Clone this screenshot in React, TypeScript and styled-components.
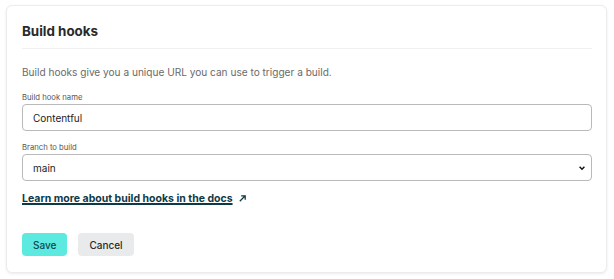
import styled, { createGlobalStyle } from 'styled-components'

const Global = createGlobalStyle`
  body {
    margin: 0;
    background: #ffffff;
    font-family: Inter, 'Liberation Sans', sans-serif;
  }
`

export default function App () {
  return (
    <>
      <Global />
      <Page>
        <Card>
          <Title>Build hooks</Title>
          <Body>
            <Intro>Build hooks give you a unique URL you can use to trigger a build.</Intro>
            <Field $gap={15}>
              <Label>Build hook name</Label>
              <Input defaultValue="Contentful" />
            </Field>
            <Field $gap={12}>
              <Label>Branch to build</Label>
              <SelectWrap>
                <Select defaultValue="main">
                  <option value="main">main</option>
                </Select>
                <Chevron viewBox="0 0 10 10">
                  <path d="M2 3.5 L5 6.5 L8 3.5" fill="none" stroke="#111" strokeWidth="1.8" />
                </Chevron>
              </SelectWrap>
            </Field>
            <DocsLink href="#">
              <span>Learn more about build hooks in the docs</span>
              <svg width="9" height="9" viewBox="0 0 10 10">
                <path d="M2 8 L8 2 M3.5 2 H8 V6.5" fill="none" stroke="#0e3a47" strokeWidth="1.4" />
              </svg>
            </DocsLink>
            <Actions>
              <Button $primary>Save</Button>
              <Button>Cancel</Button>
            </Actions>
          </Body>
        </Card>
      </Page>
    </>
  )
}

const Page = styled.div`
  padding: 5px 7px 6px 6px;
`

const Card = styled.section`
  background: #fff;
  border: 1px solid #ececec;
  border-radius: 6px;
  box-shadow: 0 1px 3px rgba(0,0,0,0.08);
  padding: 0 14px 16px 15px;
  height: 268px;
  box-sizing: border-box;
`

const Title = styled.h2`
  margin: 0;
  padding: 17px 0 9px 0;
  font-size: 13.4px;
  font-weight: 700;
  color: #2a2a2a;
  border-bottom: 1px solid #f0f0f0;
`

const Body = styled.div`
  display: flex;
  flex-direction: column;
`

const Intro = styled.p`
  margin: 17px 0 0 0;
  font-size: 10.1px;
  color: #6a6a6a;
`

const Field = styled.div<{ $gap: number }>`
  display: flex;
  flex-direction: column;
  margin-top: ${p => p.$gap}px;
`

const Label = styled.label`
  font-size: 7.7px;
  color: #555;
  margin-bottom: 2px;
`

const Input = styled.input`
  box-sizing: border-box;
  height: 27px;
  border: 1px solid #b9b9b9;
  border-radius: 4px;
  padding: 0 10px;
  font-family: Inter, 'Liberation Sans', sans-serif;
  font-size: 10px;
  color: #1b1b1b;
  outline: none;
`

const SelectWrap = styled.div`
  position: relative;
`

const Select = styled.select`
  appearance: none;
  width: 100%;
  box-sizing: border-box;
  height: 27px;
  border: 1px solid #b9b9b9;
  border-radius: 4px;
  padding: 0 10px;
  background: #fff;
  font-family: Inter, 'Liberation Sans', sans-serif;
  font-size: 10px;
  color: #1b1b1b;
  outline: none;
`

const Chevron = styled.svg`
  position: absolute;
  right: 6px;
  top: 10px;
  width: 8px;
  height: 8px;
  pointer-events: none;
`

const DocsLink = styled.a`
  display: flex;
  align-items: center;
  gap: 5px;
  margin-top: 11px;
  font-size: 10.5px;
  font-weight: 700;
  color: #0e3a47;
  span {
    text-decoration: underline;
    text-underline-offset: 2px;
  }
`

const Actions = styled.div`
  display: flex;
  gap: 11px;
  margin-top: 28px;
`

const Button = styled.button<{ $primary?: boolean }>`
  height: 23px;
  padding: 0 11px;
  border: none;
  border-radius: 4px;
  font-family: Inter, 'Liberation Sans', sans-serif;
  font-size: 10px;
  font-weight: 500;
  background: ${p => (p.$primary ? '#5ce9df' : '#e9eaec')};
  color: ${p => (p.$primary ? '#0c4654' : '#2a2a2a')};
`
